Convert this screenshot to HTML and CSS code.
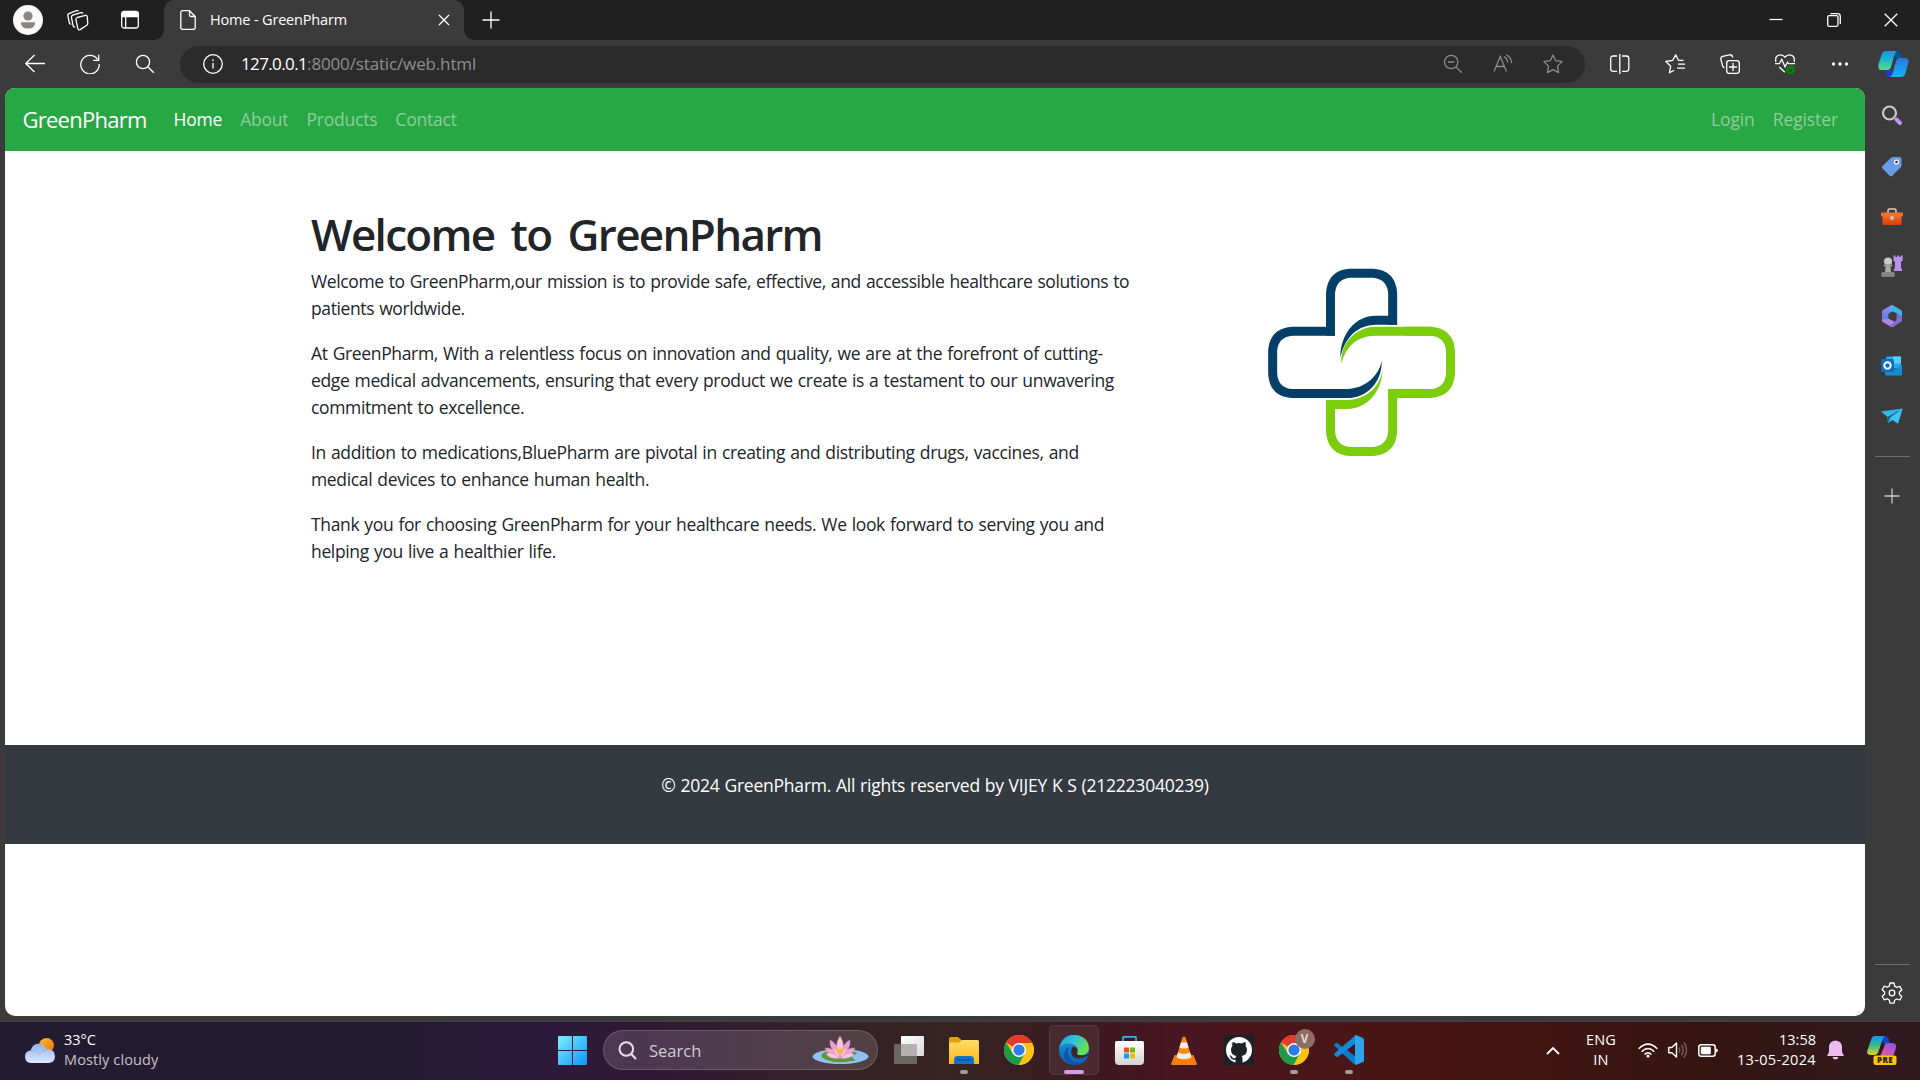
FILE: index.html
```html
<!DOCTYPE html>
<html lang="en">
<head>
<meta charset="utf-8">
<title>Home - GreenPharm</title>
<link rel="stylesheet" href="styles.css">
</head>
<body>
<svg class="defs" width="0" height="0" aria-hidden="true">
  <defs>
    <linearGradient id="win" x1="0" y1="0" x2="1" y2="1"><stop offset="0" stop-color="#7df0ff"/><stop offset="1" stop-color="#0d94fb"/></linearGradient>
    <linearGradient id="folder" x1="0" y1="0" x2="0" y2="1"><stop offset="0" stop-color="#ffdb6b"/><stop offset="1" stop-color="#fdb913"/></linearGradient>
    <linearGradient id="cloud" x1="0" y1="0" x2="0" y2="1"><stop offset="0" stop-color="#8fb4ee"/><stop offset="1" stop-color="#dbe8fc"/></linearGradient>
    <linearGradient id="sun" x1="0" y1="0" x2="1" y2="1"><stop offset="0" stop-color="#fbc02b"/><stop offset="1" stop-color="#ee6a10"/></linearGradient>
    <linearGradient id="edgeTop" x1="0" y1="0" x2="1" y2=".5"><stop offset="0" stop-color="#1c9fe6"/><stop offset=".5" stop-color="#33c2d6"/><stop offset="1" stop-color="#6be34e"/></linearGradient>
    <linearGradient id="edgeLow" x1="0" y1="0" x2="0" y2="1"><stop offset="0" stop-color="#1b9de2"/><stop offset="1" stop-color="#0f5fb4"/></linearGradient>
    <linearGradient id="copA" x1="0" y1="0" x2="0" y2="1"><stop offset="0" stop-color="#0a9be8"/><stop offset=".45" stop-color="#1fb5c9"/><stop offset="1" stop-color="#5ddc8c"/></linearGradient>
    <linearGradient id="copB" x1="0" y1="0" x2="0" y2="1"><stop offset="0" stop-color="#2a74e0"/><stop offset="1" stop-color="#12b4fa"/></linearGradient>
    <linearGradient id="preA" x1="0" y1="0" x2="0" y2="1"><stop offset="0" stop-color="#1696f0"/><stop offset=".5" stop-color="#35b98a"/><stop offset="1" stop-color="#e8d51c"/></linearGradient>
    <linearGradient id="preB" x1="1" y1="0" x2="0" y2="1"><stop offset="0" stop-color="#8d4ff0"/><stop offset="1" stop-color="#f0618a"/></linearGradient>
    <linearGradient id="m365" x1="0" y1="0" x2="0" y2="1"><stop offset="0" stop-color="#a88aee"/><stop offset="1" stop-color="#4a78e4"/></linearGradient>
    <linearGradient id="bag" x1="0" y1="0" x2="0" y2="1"><stop offset="0" stop-color="#ffffff"/><stop offset="1" stop-color="#d4d4d4"/></linearGradient>
    <linearGradient id="case" x1="0" y1="0" x2="0" y2="1"><stop offset="0" stop-color="#f4702a"/><stop offset="1" stop-color="#d8400a"/></linearGradient>
    <linearGradient id="pane" x1="0" y1="0" x2="1" y2="1"><stop offset="0" stop-color="#fff"/><stop offset="1" stop-color="#d9d9d9"/></linearGradient>
    <symbol id="chrome" viewBox="0 0 30 30">
      <circle cx="15" cy="15" r="15" fill="#fbc116"/>
      <path d="M15 15L2 7.5A15 15 0 0 1 28 7.5Z" fill="#e33b2e"/>
      <path d="M15 8H28.3A15 15 0 0 0 15 0Z" fill="#e33b2e"/>
      <path d="M2 7.5L8.9 18.5L15 22L15 30A15 15 0 0 1 2 7.5Z" fill="#1f9a4c"/>
      <path d="M21.1 18.5L14.7 30A15 15 0 0 1 8 28L15 18Z" fill="#1f9a4c"/>
      <path d="M21.1 18.5L14.7 30A15 15 0 0 0 28.2 8H15Z" fill="#fbc116"/>
      <circle cx="15" cy="15" r="7" fill="#fff"/><circle cx="15" cy="15" r="5.6" fill="#2f7be8"/>
    </symbol>
  </defs>
</svg>

<div class="browser">
  <header class="titlebar">
    <div class="title-tools">
      <svg width="30" height="30" viewBox="0 0 30 30"><circle cx="15" cy="15" r="15" fill="#fafafa"/><circle cx="15" cy="11" r="4.6" fill="#8b8785"/><path d="M8 17.200h14q.4 6.300-7 6.300t-7-6.300Z" fill="#8b8785"/></svg>
      <svg width="22" height="22" viewBox="0 0 22 22" class="line"><path d="M10.300 8.500l8-2.200q1.700-.3 1.900 1.300l.6 6.700q0 1.400-1 2l-6.600 4.300q-1.500.8-2.200-.7L8.900 10.800q-.4-1.700 1.400-2.300Z"/><path d="M8.300 18q-1.600.5-2.200-1.200L4.500 8.500Q4.200 6.800 5.700 6.200L14 3.700q1.400-.4 2 .9"/><path d="M4.200 15Q2.700 15.300 2.300 13.800L.9 6.700Q.6 5.200 1.900 4.600L9.400 1.700q1.500-.5 2.200.5"/></svg>
      <svg width="20" height="20" viewBox="0 0 20 20" class="line"><rect x="1.700" y="2" width="16.600" height="16" rx="2.500"/><path d="M1.700 6.500V4q0-2.500 2.500-2.500h11.600q2.500 0 2.500 2.500v2.500Z" fill="#fff"/><path d="M5.700 6v12"/></svg>
    </div>
    <div class="tab">
      <svg width="16" height="20" viewBox="0 0 16 20" class="line"><path d="M.8 2.300Q.8.700 2.400.7H9.500L15.200 6.500V17.700q0 1.600-1.600 1.600H2.400q-1.600 0-1.600-1.600ZM9.500.7v4.200q0 1.600 1.600 1.600h4.100"/></svg>
      <span class="tab-title">Home - GreenPharm</span>
      <svg width="12" height="12" viewBox="0 0 12 12" class="line"><path d="M1 1l10 10M11 1L1 11"/></svg>
    </div>
    <svg class="new-tab line" width="18" height="18" viewBox="0 0 18 18"><path d="M9 .5v17M.5 9h17"/></svg>
    <div class="window-controls">
      <svg width="14" height="14" viewBox="0 0 14 14" class="line"><path d="M.5 6.500h13"/></svg>
      <svg width="14" height="14" viewBox="0 0 14 14" class="line"><rect x=".7" y="2.700" width="10.300" height="10.600" rx="1.500"/><path d="M3.500.7h7q2.800 0 2.800 2.800v7.500"/></svg>
      <svg width="14" height="14" viewBox="0 0 14 14" class="line"><path d="M.7.7l12.600 12.600M13.300.7L.7 13.300"/></svg>
    </div>
  </header>

  <div class="toolbar">
    <div class="nav-tools">
      <svg width="20" height="20" viewBox="0 0 20 20" class="line"><path d="M9.500 1L.8 9.500l8.700 8.500M.8 9.500H20"/></svg>
      <svg width="20" height="20" viewBox="0 0 20 20" class="line"><path d="M17.500 5.300A9.200 9.200 0 1 0 19.200 10M18.700.7v5.600h-5.500"/></svg>
      <svg width="20" height="20" viewBox="0 0 20 20" class="line"><circle cx="8" cy="8" r="6.600"/><path d="M12.800 12.800l6 6"/></svg>
    </div>
    <div class="address">
      <svg width="20" height="20" viewBox="0 0 20 20" class="line"><circle cx="10" cy="10" r="9.300"/><path d="M10 9v5.500M10 5.300v1.900"/></svg>
      <span class="url"><span class="host">127.0.0.1</span><span class="path">:8000/static/web.html</span></span>
      <div class="address-tools">
        <svg width="20" height="20" viewBox="0 0 20 20" class="line dim"><circle cx="8.200" cy="8" r="6.700"/><path d="M13 13l5.800 5.800M5 8h6.400"/></svg>
        <svg width="20" height="20" viewBox="0 0 20 20" class="line dim"><path d="M1 17.500L7.300 2.500l6.200 15M3 12.500h8.600M10.800 2.600q3.300 1.500 3.900 6M13.300.9q5 2.400 5.400 8.300"/></svg>
        <svg width="20" height="20" viewBox="0 0 20 20" class="line dim"><path d="M10 1l2.700 5.700 6.400.9-4.600 4.500 1.100 6.500L10 15.600l-5.600 3 1.100-6.500L.9 7.600l6.400-.9Z" stroke-linejoin="round"/></svg>
      </div>
    </div>
    <div class="browser-tools">
      <svg width="20" height="20" viewBox="0 0 20 20" class="line"><path d="M7 2H3.200Q.7 2 .7 4.500v10.300q0 2.500 2.500 2.500H7M12 2h4.300q2.500 0 2.500 2.500v10.300q0 2.500-2.500 2.500H12M9.800 0v20"/></svg>
      <svg width="20" height="20" viewBox="0 0 20 20" class="line"><path d="M18.500 6.300h-5L10.700.9 7.700 6.300.8 7.500l4.900 4.700-1.300 6.600 4.800-2.600M13 10.200h7M12 14.200h8" stroke-linejoin="round"/></svg>
      <svg width="20" height="20" viewBox="0 0 20 20" class="line"><rect x="6.700" y="6.700" width="12.600" height="12.600" rx="2.500"/><path d="M13 9v8M9 13h8M4.500 14q-1.200-.4-1.700-1.700L.9 5.500Q.4 3 2.600 2.300L9.500.8q2.500-.4 3.300 2.700"/></svg>
      <svg width="20" height="20" viewBox="0 0 20 20" class="line"><path d="M.8 8Q-.3 1.200 5.200.8 8.300.7 10 3.200 11.700.7 14.800.8 20.300 1.200 19.200 8M0 9.700h4.300L6.800 5.500l3.200 7.300 2.500-4.600 1 1.500H20M4.300 13l5.500 5.300"/><circle cx="15.500" cy="16" r="4.500" fill="#107c10" stroke="none"/><path d="M13.700 16.300l1.200 1.200 2.500-2.700" stroke="#063e06" stroke-width="1"/></svg>
      <svg width="20" height="20" viewBox="0 0 20 20" fill="#fff"><circle cx="3.500" cy="10" r="1.700"/><circle cx="10" cy="10" r="1.700"/><circle cx="16.500" cy="10" r="1.700"/></svg>
      <svg width="31" height="28" viewBox="0 0 31 28"><path d="M14 1H20Q22 1 23 4L24 8H18Z" fill="#0c5391"/><path d="M7 20H15L13 27H11Q9 27 8 24Z" fill="#2437d6"/><path d="M8 1H19Q17 2 16 6L13 17Q12 20 9 20H4Q-.5 20 .6 14L3.500 5Q4.700 1 8 1Z" fill="url(#copA)"/><path d="M23 27H12Q14 26 15 22L18 11Q19 8 22 8H27Q31.500 8 30.300 13L27.500 23Q26.300 27 23 27Z" fill="url(#copB)"/></svg>
    </div>
  </div>

  <div class="workspace">
    <div class="page">
      <nav class="navbar">
        <a class="brand">GreenPharm</a>
        <div class="nav-links"><a class="active">Home</a><a>About</a><a>Products</a><a>Contact</a></div>
        <div class="nav-links account"><a>Login</a><a>Register</a></div>
      </nav>
      <main class="container">
        <section class="intro">
          <h1>Welcome to GreenPharm</h1>
          <p>Welcome to GreenPharm,our mission is to provide safe, effective, and accessible healthcare solutions to<br>patients worldwide.</p>
          <p class="wide">At GreenPharm, With a relentless focus on innovation and quality, we are at the forefront of cutting-<br>edge medical advancements, ensuring that every product we create is a testament to our unwavering<br>commitment to excellence.</p>
          <p class="wide">In addition to medications,BluePharm are pivotal in creating and distributing drugs, vaccines, and<br>medical devices to enhance human health.</p>
          <p class="wide">Thank you for choosing GreenPharm for your healthcare needs. We look forward to serving you and<br>helping you live a healthier life.</p>
        </section>
        <aside class="logo">
          <svg width="250" height="220" viewBox="0 0 750 660">
            <g fill="none" stroke="#033f68" stroke-width="27">
              <path d="M274.500 257V130Q279 74 332 70H402Q457 74 461 130V224"/>
              <path d="M288 244H160Q105 248 101 302V372Q105 427 160 430.500H240"/>
            </g>
            <g fill="#033f68">
              <path d="M474 197H410C350 197 303 250 304 325C315 265 355 224 410 224H474Z"/>
              <path d="M160 417H325C375 415 420 380 428 332C430 395 385 444 325 444H160Z"/>
            </g>
            <g fill="none" stroke="#7dcd0f" stroke-width="27">
              <path d="M500 244H575Q630 248 634.500 302V372Q630 427 575 430.500H447"/>
              <path d="M461 430V545Q457 600 402 604.500H332Q279 600 274.500 545V450"/>
            </g>
            <g fill="#7dcd0f">
              <path d="M580 230.500H410C350 231 303 280 307 342C320 290 355 257.500 410 257.500H580Z"/>
              <path d="M261 450H325C375 450 425 415 431 355C430 430 380 477 325 477H261Z"/>
            </g>
          </svg>
        </aside>
      </main>
      <footer class="footer">© 2024 GreenPharm. All rights reserved by VIJEY K S (212223040239)</footer>
    </div>

    <aside class="sidebar">
      <div class="cell"><svg width="22" height="22" viewBox="0 0 22 22"><circle cx="8.500" cy="8" r="6.500" fill="none" stroke="#c9c9c9" stroke-width="2.200"/><path d="M13 12.500l2.500 2.500" stroke="#999" stroke-width="2"/><path d="M15.500 14.500l3.500 3.500" stroke="#c793f2" stroke-width="4" stroke-linecap="round"/></svg></div>
      <div class="cell"><svg width="22" height="22" viewBox="0 0 22 22"><path d="M12 1h6.500q2 0 2 2v6.500q0 1-.7 1.700l-8.600 8.600q-1.200 1.200-2.500 0L1.500 12.600q-1.200-1.200 0-2.500L10 1.800Q11 1 12 1Z" fill="#6a9be8"/><circle cx="15.500" cy="6" r="2.600" fill="#fff"/><circle cx="15.500" cy="6" r="1.300" fill="#333"/></svg></div>
      <div class="cell"><svg width="22" height="22" viewBox="0 0 22 22"><path d="M7 7V4.500Q7 3 8.500 3h5Q15 3 15 4.500V7" fill="none" stroke="#d5d0ce" stroke-width="1.600"/><rect x="1.500" y="8" width="19" height="11" rx="1.500" fill="url(#case)"/><rect x="0" y="6.500" width="22" height="4" rx="1" fill="#f4702a"/><circle cx="11" cy="12" r="2" fill="#c9c5c2"/></svg></div>
      <div class="cell"><svg width="22" height="22" viewBox="0 0 22 22"><circle cx="7" cy="6.500" r="4" fill="#c9c9c9"/><path d="M5 9h4l1 8H4Z" fill="#aaa"/><rect x="2.500" y="9.500" width="9" height="2" rx="1" fill="#9b9b9b"/><path d="M2 17h10q2 0 2 2.500T12 22H2Q0 22 0 19.500T2 17Z" fill="#858585"/><path d="M12.500.5h2v1.500h1.700V.5h2v1.500h1.500V.5h2v5l-1.700 1.500v5.500l1.500 3.500h-9l1.500-3.500V7l-1.500-1.500Z" fill="#bb90ee"/></svg></div>
      <div class="cell"><svg width="22" height="22" viewBox="0 0 22 22"><path d="M10.500 0L1.500 5.200Q1 5.500 1 6.500V16.500L7.500 13.500V9L14 4.500V2Z" fill="url(#m365)"/><path d="M10.500 0Q11.500 0 12.500.7L20 5Q21 5.700 21 6.500V12L15.500 8.200 10.500 6 8.500 7V3Z" fill="#3fb4ea"/><path d="M1 14.500V16.500Q5 19 9.500 21.500 11 22.500 12.500 21.500L14 20.500V17L8 13.500Z" fill="#b184e2"/><path d="M15.500 8.200L21 12V15.500Q21 16.500 20 17L12.500 21.500Q10 22 9 20.500L14 16.500Q15.500 15.500 15.500 13.500Z" fill="#7d6fd6"/><path d="M11.500 6.800L15.200 9v4.300L11.500 15.500 7.700 13.300V9Z" fill="#3b3b3b"/></svg></div>
      <div class="cell"><svg width="22" height="22" viewBox="0 0 22 22"><rect x="5" y="1.500" width="15" height="12" rx="1.500" fill="#2aa7ea"/><path d="M12 1.500h8v7h-8Z" fill="#52cffa"/><path d="M4 12l9 3 8-5v9q0 1.500-1.500 1.500h-14Q4 20.500 4 19Z" fill="#168cd8"/><rect x="0" y="4" width="13" height="13" rx="1.500" fill="#0f6cbd"/><circle cx="6.500" cy="10.500" r="3.200" fill="none" stroke="#fff" stroke-width="2"/></svg></div>
      <div class="cell"><svg width="22" height="22" viewBox="0 0 22 22"><path d="M0 6.500L21.500 3.500 17 18.500 11.500 15 7 18 6.500 12Z" fill="#35b5e9"/><path d="M21.500 3.500L6.500 12 7 18 9 13Z" fill="#0c6698"/><path d="M9 13L21.500 3.500 17 18.500Z" fill="#3cc4f4"/></svg></div>
      <div class="divider"></div>
      <svg class="add line" width="16" height="16" viewBox="0 0 16 16"><path d="M8 .5v15M.5 8h15" stroke="#c8c8c8"/></svg>
      <div class="settings">
        <div class="divider"></div>
        <svg width="22" height="22" viewBox="0 0 22 22" class="line"><path d="M9 1h4l.7 3.200 2 1.200 3.100-1 2 3.500-2.400 2.200v2.200l2.400 2.200-2 3.500-3.100-1-2 1.200L13 21.200H9l-.7-3.200-2-1.200-3.100 1-2-3.500 2.400-2.200V9.900L1.200 7.700l2-3.500 3.100 1 2-1.200Z" stroke-linejoin="round"/><circle cx="11" cy="11" r="2.800"/></svg>
      </div>
    </aside>
  </div>
</div>

<div class="taskbar">
  <div class="weather">
    <svg width="30" height="25" viewBox="0 0 30 25"><circle cx="21.500" cy="7.500" r="7.500" fill="url(#sun)"/><path d="M6 25Q0 24.500 0 18.500 0 13 6 12.300 7 6 13.500 5.700 19.500 6 21.500 11.500 30 10.500 30 18.300 30 24.500 24 25Z" fill="url(#cloud)"/><path d="M5 12.700Q12 11.500 15 16M21.500 11.500q-4 .5-5.500 3.500" fill="none" stroke="#86a6e4" stroke-width="1" opacity=".6"/></svg>
    <div class="stack"><span>33°C</span><span class="muted">Mostly cloudy</span></div>
  </div>
  <div class="apps">
    <div class="app"><svg width="29" height="29" viewBox="0 0 29 29"><path d="M1 0h13v14H0V1Q0 0 1 0ZM15 0h13q1 0 1 1v13H15ZM0 15h14v14H1q-1 0-1-1ZM15 15h14v13q0 1-1 1H15Z" fill="url(#win)"/></svg></div>
    <div class="search">
      <svg width="19" height="19" viewBox="0 0 19 19"><circle cx="8.300" cy="8" r="6.800" fill="none" stroke="#e8e0e6" stroke-width="2"/><path d="M13.200 13l4.800 5" stroke="#e8e0e6" stroke-width="2.200"/></svg>
      <span>Search</span>
      <svg width="57" height="28" viewBox="0 0 57 28"><ellipse cx="28.500" cy="20.500" rx="28" ry="7.500" fill="#8fc2f2"/><path d="M10 18Q14 14 28 14T46 18Q50 24 40 25 24 28 15 24 8 22 10 18Z" fill="#5d9634"/><path d="M47 17l-8 3 5 5q5-3 3-8Z" fill="#8fc2f2"/><g fill="#eaa6cd" stroke="#d681b4" stroke-width=".5"><path d="M28 21Q17 22 13 12q8-1 15 9Z"/><path d="M28 21q11 1 15-9-8-1-15 9Z"/><path d="M28 21Q17 14 18 4q8 3 10 17Z"/><path d="M28 21q11-7 10-17-8 3-10 17Z"/><path d="M28 21Q21 10 28 0q7 10 0 21Z" fill="#f6c6de"/><path d="M28 22Q19 24 14 18q7-3 14 4Z" fill="#f6c6de"/><path d="M28 22q9 2 14-4-7-3-14 4Z" fill="#f6c6de"/><path d="M28 22q-7-3-7-11 6 3 7 11Zm0 0q7-3 7-11-6 3-7 11Z" fill="#f4bcd9"/></g><path d="M24.500 11.500l3.500 2 3.500-2-1 6h-5Z" fill="#f5b43a"/></svg>
    </div>
    <div class="app"><svg width="30" height="28" viewBox="0 0 30 28"><rect x="0" y="8" width="23" height="20" rx="1" fill="#6a6664"/><rect x="7" y="0" width="23" height="20" rx="1" fill="url(#pane)"/><rect x="7" y="8" width="16" height="12" fill="#b3b1b0"/></svg></div>
    <div class="app"><svg width="30" height="27" viewBox="0 0 30 27"><path d="M0 1.500Q0 0 1.500 0H9l4 3.500V8H0Z" fill="#e0a10d"/><path d="M0 5.500h10l3-2.500h15.500Q30 3 30 4.500V27H0Z" fill="url(#folder)"/><path d="M5 27v-4.500Q5 19 8.500 19h13q3.500 0 3.500 3.500V27Z" fill="#1272c8"/><path d="M8.500 23h13" stroke="#0b4a87" stroke-width="1.200"/></svg><i class="mark"></i></div>
    <div class="app"><svg width="30" height="30"><use href="#chrome"/></svg></div>
    <div class="app current"><svg width="30" height="30" viewBox="0 0 30 30"><circle cx="15" cy="15" r="15" fill="url(#edgeLow)"/><path d="M10 12Q7 20 13 25.500 19 30 28 23.500 24 30 15 30 3 28 5.500 18 7 13 10 12Z" fill="#0d55a6"/><path d="M.5 12.500Q3 0 15.500 0 29 1 30 13 29.500 20 21.500 20.300 16.500 20 18.500 16.800 19.500 10.500 13 8.800 5 7.500.5 12.500Z" fill="url(#edgeTop)"/><path d="M13 12.500Q10.500 19 15 22.500 20 25.800 28 22.500l1.500-4Q26 21 21.500 20.300 16.500 20 18.500 16.800 19 12.500 15 11.500Z" fill="#3d2828"/><path d="M14 22q6.500 3.500 15-1.500-2.500 6-7.500 8Z" fill="#1166b8"/></svg><i class="mark active-mark"></i></div>
    <div class="app"><svg width="29" height="29" viewBox="0 0 29 29"><path d="M8 6V1.500Q8 .8 8.700.8h11.600q.7 0 .7.700V6" fill="none" stroke="#32b4ee" stroke-width="1.700"/><path d="M1.500 5h26Q29 5 29 6.500V25q0 4-4 4H4q-4 0-4-4V6.500Q0 5 1.500 5Z" fill="url(#bag)"/><path d="M9 11.500h5v5H9Z" fill="#f25022"/><path d="M15 11.500h5v5h-5Z" fill="#7fba00"/><path d="M9 17.500h5v5H9Z" fill="#00a4ef"/><path d="M15 17.500h5v5h-5Z" fill="#ffb900"/></svg></div>
    <div class="app"><svg width="26" height="29" viewBox="0 0 26 29"><path d="M3.500 19h19L26 28q0 1-1 1H1q-1 0-1-1Z" fill="#f57d09"/><path d="M11.500 1.500Q13-.5 14.500 1.500L21 22q-8 4.500-16 0Z" fill="#f58a10"/><path d="M10 6.500h6l1.600 5q-4.600 2-9.200 0Z" fill="#ececec"/><path d="M7 16.500q6 2.500 12 0l1.500 5q-7.500 3.500-15 0Z" fill="#ececec"/></svg></div>
    <div class="app"><svg width="30" height="30" viewBox="0 0 30 30"><rect width="30" height="30" fill="#1d2024"/><circle cx="15" cy="15" r="13" fill="#fff"/><path d="M11.500 28v-3.300q-4 .8-5-2.300-.5-1.200-1.400-1.800 1.900-.4 2.900 1.400 1.400 1.800 3.500.9.100-1.300.9-2Q7 20.400 7 14.500q0-2.100 1.400-3.600-.6-1.700.2-4 1.900.2 3.700 1.500 2.700-.7 5.400 0 1.800-1.300 3.700-1.500.8 2.300.2 4Q23 12.400 23 14.500q0 5.900-5.400 6.400.9.900.9 2.600V28Z" fill="#1d2024"/></svg></div>
    <div class="app"><svg width="30" height="30"><use href="#chrome"/></svg><b class="profile">V</b><i class="mark"></i></div>
    <div class="app"><svg width="30" height="30" viewBox="0 0 30 30"><path d="M22 0L8.500 12 3 7.800.5 9 0 10.500 18 27.500 22 30Z" fill="#0f7cc8"/><path d="M0 19.500L2.500 22 3.500 22 22 8V0L1 18Z" fill="#1689d6"/><path d="M22 8v14l-9-7Z" fill="#451515"/><path d="M22 0l7 3q1 .5 1 1.500v21q0 1-1 1.500l-7 3-1-1V1Z" fill="#2da4f0"/></svg><i class="mark"></i></div>
  </div>
  <div class="tray">
    <svg class="chevron" width="14" height="9" viewBox="0 0 14 9"><path d="M1 8l6-6 6 6" fill="none" stroke="#fff" stroke-width="1.800"/></svg>
    <div class="stack lang"><span>ENG</span><span>IN</span></div>
    <div class="status">
      <svg width="20" height="15" viewBox="0 0 20 15" fill="none" stroke="#fff" stroke-width="1.500"><path d="M.7 5.800q9.300-9.300 18.600 0M3.700 8.700q6.300-6.300 12.600 0M6.500 11.500q3.500-3.500 7 0"/><circle cx="10" cy="13" r="1.600" fill="#fff" stroke="none"/></svg>
      <svg width="20" height="18" viewBox="0 0 20 18" fill="none" stroke="#fff" stroke-width="1.400"><path d="M.8 6.500h3L8.500 2v14L3.800 11.700h-3Z" stroke-linejoin="round"/><path d="M11 6.500q1.500 2.500 0 5M13.500 4q3.200 5 0 10M16 1.500q5 7.500 0 15" stroke="#77605e"/></svg>
      <svg width="20" height="13" viewBox="0 0 20 13"><rect x=".8" y=".8" width="16.400" height="11.400" rx="2.500" fill="none" stroke="#fff" stroke-width="1.500"/><rect x="2.800" y="2.800" width="10" height="7.400" rx="1" fill="#fff"/><path d="M18 4.500q2 .3 2 2t-2 2Z" fill="#fff"/></svg>
    </div>
    <div class="stack clock"><span>13:58</span><span>13-05-2024</span></div>
    <svg class="bell" width="17" height="20" viewBox="0 0 17 20"><path d="M8.500.5Q15 1 15 7.500v4.500l2 4H0l2-4V7.500Q2 1 8.500.5ZM5.500 17h6q-.7 2.500-3 2.500t-3-2.500Z" fill="#f0bcf0"/></svg>
    <svg width="30" height="29" viewBox="0 0 30 29"><path d="M12 0h6q3 0 4 4l1 4h-6Z" fill="#1443c8"/><path d="M8 0h10q-2 1-3 5l-3 9q-1 5-5 5H4q-5 0-3.500-5L4 4Q5 0 8 0Z" fill="url(#preA)"/><path d="M22 21H12q2-1 3-5l2-5q1-4 4-4h4q5 0 4 5l-2 6q-1 3-5 3Z" fill="url(#preB)"/><rect x="6.500" y="19.500" width="23" height="9.500" rx="2" fill="#fdc60a"/><text x="18" y="27.300" text-anchor="middle" class="pre">PRE</text></svg>
  </div>
</div>
</body>
</html>
```
FILE: styles.css
```css
* { box-sizing: border-box; }

body {
  margin: 0;
  width: 1920px;
  height: 1080px;
  overflow: hidden;
  display: flex;
  flex-direction: column;
  background: #3b3b3b;
  font-family: "Open Sans", "Noto Sans", sans-serif;
  color: #fff;
}

svg { display: block; flex: none; }
.defs { position: absolute; }

.line { fill: none; stroke: #fff; stroke-width: 1.3; }
.line.dim { stroke: #8b8b8b; }

.browser { height: 1021px; display: flex; flex-direction: column; }

/* Window title bar */
.titlebar {
  height: 40px;
  background: #202020;
  display: flex;
  align-items: center;
}
.title-tools {
  width: 164px;
  padding-left: 13px;
  display: flex;
  align-items: center;
}
.title-tools svg:nth-child(2) { margin-left: 24px; }
.title-tools svg:nth-child(3) { margin-left: 31px; }
.tab {
  position: relative;
  width: 300px;
  height: 40px;
  padding: 0 14px 0 16px;
  display: flex;
  align-items: center;
  background: #3b3b3b;
  border-radius: 10px 10px 0 0;
}
.tab::before,
.tab::after {
  content: "";
  position: absolute;
  bottom: 0;
  width: 10px;
  height: 10px;
}
.tab::before { left: -10px; background: radial-gradient(circle at 0 0, #202020 9.5px, #3b3b3b 10px); }
.tab::after { right: -10px; background: radial-gradient(circle at 100% 0, #202020 9.5px, #3b3b3b 10px); }
.tab-title {
  margin-left: 14px;
  margin-right: auto;
  font-size: 14.5px;
  line-height: 20px;
  letter-spacing: -0.0116em;
}
.new-tab { margin-left: 17.5px; }
.window-controls { margin-left: auto; padding-right: 22px; display: flex; gap: 43.5px; }

/* Address row */
.toolbar { height: 48px; display: flex; align-items: center; padding-left: 25px; }
.nav-tools { width: 155px; display: flex; gap: 35px; }
.address {
  width: 1405px;
  height: 37px;
  padding: 0 22px 0 22.5px;
  display: flex;
  align-items: center;
  background: #2b2b2b;
  border-radius: 19px;
}
.url { margin-left: 18.5px; font-size: 17px; line-height: 24px; white-space: nowrap; }
.host { letter-spacing: -0.037em; }
.path { color: #8f8f8f; letter-spacing: -0.0085em; }
.address-tools { margin-left: auto; display: flex; gap: 30px; }
.browser-tools { flex: 1; display: flex; align-items: center; padding-left: 25px; gap: 35px; }
.browser-tools svg:last-child { margin-left: -7px; }

/* Page and sidebar */
.workspace { flex: 1; display: flex; padding-left: 5px; }
.page {
  width: 1860px;
  height: 928px;
  overflow: hidden;
  border-radius: 10px;
  background: #fff;
  color: #212529;
}
.navbar {
  height: 63px;
  padding: 0 27px 2px 17.5px;
  display: flex;
  align-items: center;
  background: #28a745;
}
.brand { color: #fff; font-size: 22px; letter-spacing: -0.034em; margin-right: 27px; }
.nav-links {
  display: flex;
  gap: 18px;
  font-size: 17.5px;
  letter-spacing: -0.012em;
  color: #8ecf9c;
}
.nav-links .active { color: #fff; }
.account { margin-left: auto; letter-spacing: -0.006em; }

.container {
  width: 1282px;
  height: 594px;
  margin: 0 auto;
  display: flex;
}
.intro { width: 855px; padding: 56px 0 0 17px; }
.intro h1 {
  margin: 0 0 7px;
  font-size: 44px;
  line-height: 54px;
  font-weight: 600;
  letter-spacing: -0.038em;
  word-spacing: 0.143em;
}
.intro p {
  margin: 0 0 18px;
  font-size: 17.5px;
  line-height: 27px;
  letter-spacing: -0.022em;
  word-spacing: 0.05em;
  white-space: nowrap;
}
.intro p.wide { letter-spacing: -0.02em; }
.logo { flex: 1; padding: 99px 0 0 90px; }
.footer {
  height: 99px;
  padding-top: 27px;
  background: #343a40;
  color: #fff;
  text-align: center;
  font-size: 17.5px;
  line-height: 27px;
  letter-spacing: -0.0125em;
  word-spacing: 0.03em;
}

.sidebar { flex: 1; display: flex; flex-direction: column; align-items: center; padding: 3px 1px 0 0; }
.cell { height: 50px; display: flex; align-items: center; }
.sidebar .cell:nth-child(2) svg,
.sidebar .cell:nth-child(3) svg { margin-top: 2px; }
.divider { width: 35px; height: 1px; background: #6e6e6e; }
.sidebar > .divider { margin-top: 15px; }
.add { margin-top: 31px; }
.settings { margin-top: auto; padding-bottom: 17px; display: flex; flex-direction: column; align-items: center; gap: 17px; }

/* Taskbar */
.taskbar {
  height: 59px;
  display: grid;
  grid-template-columns: 545px 1fr 384px;
  align-items: center;
  padding-bottom: 1px;
  background: linear-gradient(90deg, #231c30 0, #241c33 410px, #2b1a3b 510px, #301836 640px, #35202a 800px, #352422 950px, #3b1a22 1070px, #481622 1180px, #4a1617 1340px, #441512 1480px, #351512 1700px, #301a20 1920px);
  box-shadow: inset 0 1px 0 #4a4047;
}
.weather { display: flex; align-items: center; gap: 9px; padding-left: 25px; }
.stack { display: flex; flex-direction: column; font-size: 14.5px; line-height: 20px; white-space: nowrap; }
.muted { color: #c6c3ca; letter-spacing: 0.008em; }
.apps { display: flex; align-items: center; height: 58px; }
.app {
  position: relative;
  width: 55px;
  height: 50px;
  display: flex;
  align-items: center;
  justify-content: center;
}
.current::before {
  content: "";
  position: absolute;
  inset: 0 2.5px;
  border-radius: 5px;
  background: rgba(255, 255, 255, 0.07);
  border: 1px solid rgba(255, 255, 255, 0.07);
}
.current svg { position: relative; }
.mark {
  position: absolute;
  bottom: 1px;
  left: 23.5px;
  width: 8px;
  height: 4px;
  border-radius: 2px;
  background: #a59a9c;
}
.active-mark { left: 17.5px; width: 20px; background: #d89ae2; }
.profile {
  position: absolute;
  left: 28px;
  top: 4px;
  width: 20px;
  height: 20px;
  border-radius: 50%;
  background: #8d6e63;
  color: #e3d9d6;
  font-size: 11.5px;
  line-height: 20px;
  text-align: center;
}
.search {
  width: 275px;
  height: 40px;
  margin: 0 3.5px 0 3px;
  padding: 0 8px 0 14px;
  display: flex;
  align-items: center;
  border: 1px solid rgba(255, 255, 255, 0.16);
  border-radius: 20px;
  background: rgba(255, 255, 255, 0.14);
}
.search span { margin-left: 12px; margin-right: auto; font-size: 16.5px; color: #d3cbd0; }

.tray { display: flex; align-items: center; padding-left: 10px; }
.lang { width: 74px; align-items: center; letter-spacing: 0.011em; margin-left: 4px; }
.status { display: flex; align-items: center; gap: 10px; }
.clock { width: 97px; align-items: flex-end; margin-left: 1px; }
.clock span:last-child { letter-spacing: 0.023em; }
.bell { margin: 0 22.5px 0 11px; }
.pre { font: 800 8px "Open Sans", sans-serif; fill: #2a2208; letter-spacing: 0.4px; }
```
